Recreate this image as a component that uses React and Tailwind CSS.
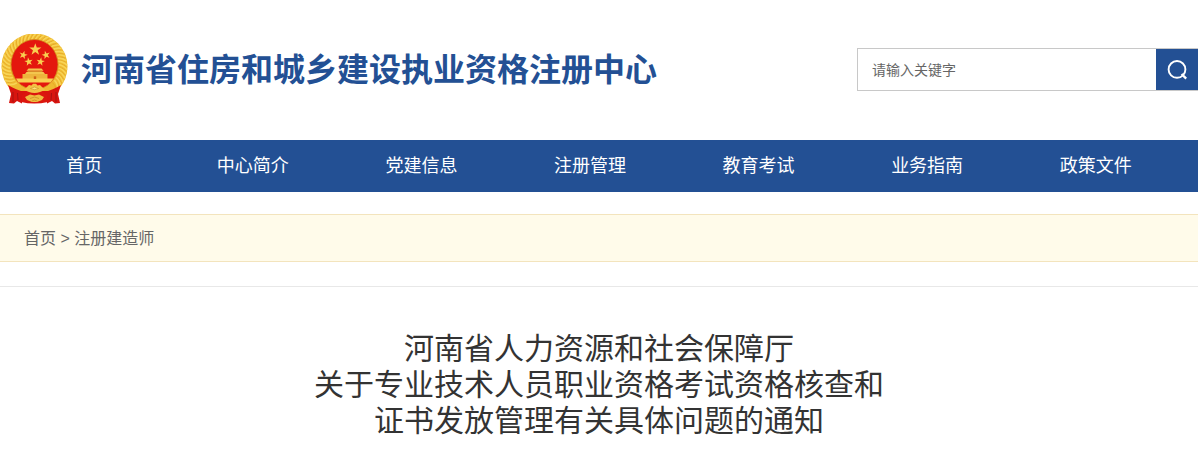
import React, { useState } from 'react';

const navItems = ['首页', '中心简介', '党建信息', '注册管理', '教育考试', '业务指南', '政策文件'];

const titleLines = [
  '河南省人力资源和社会保障厅',
  '关于专业技术人员职业资格考试资格核查和',
  '证书发放管理有关具体问题的通知'
];

// angles of the wheat ears around the emblem, open at the bottom
const grains = Array.from({ length: 34 }, (_, i) => 142 + i * 7.8);

const STAR = 'M0-10 2.3-3.2 9.5-3.1 3.7 1.2 5.9 8.1 0 3.9-5.9 8.1-3.7 1.2-9.5-3.1-2.3-3.2Z';

const stars = [
  { x: 35.3, y: 15.6, size: 0.64, turn: 0 },
  { x: 23.3, y: 21, size: 0.44, turn: 15 },
  { x: 28.7, y: 27.7, size: 0.44, turn: -10 },
  { x: 40.5, y: 27.7, size: 0.44, turn: 10 },
  { x: 46, y: 21, size: 0.44, turn: -15 }
];

const Emblem = () => (
  <svg className="h-[72px] w-[70px] shrink-0" viewBox="0 0 70 72" role="img" aria-label="国徽">
    <circle cx="34.5" cy="32.5" r="33" fill="#efb930" />
    {grains.map((angle) => (
      <g key={angle} transform={`translate(34.5 32.5) rotate(${angle})`}>
        <path d="M24-2Q29-1.5 32.5 3" fill="none" stroke="#f8d456" strokeWidth="1.6" />
        <path d="M24 1Q28 1 31 4" fill="none" stroke="#dfa024" strokeWidth=".6" />
      </g>
    ))}
    <ellipse cx="34.5" cy="30.5" rx="23.5" ry="25" fill="#e4170e" stroke="#d28a1c" strokeWidth=".8" />
    {stars.map((star) => (
      <path
        key={star.x}
        d={STAR}
        fill="#f9cf50"
        transform={`translate(${star.x} ${star.y}) rotate(${star.turn}) scale(${star.size})`}
      />
    ))}

    {/* Gate */}
    <path d="M28.5 34.5H41.5L43.5 36.8H26.5Z" fill="#f3c64e" />
    <path d="M27.5 36.8H42.5V38H27.5Z" fill="#d98a28" />
    <path d="M26.5 38H43.5L45 40H25Z" fill="#f3c64e" />
    <path d="M22.5 40H47.5V45H22.5Z" fill="#edb53c" />
    <path d="M16 44.5H53.5L50.5 48.5H18.5Z" fill="#f9d052" />
    <path d="M33.8 42.3H36.2V45H33.8Z" fill="#cf6418" />

    {/* Red drapes */}
    <path d="M21 57H48V68Q34 71 21 68Z" fill="#dc160e" />
    <path d="M8 51C13 54 19 57 26 58L22 61V69.5L17 67 14 69.5 9 69 11 60Z" fill="#d8140f" />
    <path d="M61 51C56 54 50 57 43 58L47 61V69.5L52 67 55 69.5 60 69 58 60Z" fill="#d8140f" />
    <path d="M13 58 13 68M17.5 59 18 66M56 58 56 68M51.5 59 51 66" stroke="#a81010" fill="none" />

    {/* Gear */}
    <path d="M27 53 29 51 31.5 51.5 33 49.8H36L37.5 51.5 40 51 42 53 45 56 40 58Q34.5 60 29 58L24 56Z" fill="#f3c246" />
    <path d="M30.5 54.5Q34.5 51.5 38.5 54.5Q34.5 57 30.5 54.5Z" fill="#ffe37a" stroke="#c98a1c" strokeWidth=".6" />
    <path d="M25 63 30 60.5 34.5 61.5 39 60.5 44 63 42 66 37 68H32L27 66Z" fill="#efbd40" />
    <path d="M30 64.5Q34.5 61.5 39 64.5M32 67Q34.5 65 37 67" fill="none" stroke="#c98a1c" strokeWidth=".7" />
  </svg>
);

const SearchForm = () => {
  const [keyword, setKeyword] = useState('');

  return (
    <form
      className="flex h-11 w-[341px] shrink-0 pb-px"
      onSubmit={(e) => e.preventDefault()}
    >
      <div className="flex flex-1 border border-r-0 border-[#c8c8c8]">
        <input
          type="text"
          aria-label="请输入关键字"
          placeholder="请输入关键字"
          value={keyword}
          onChange={(e) => setKeyword(e.target.value)}
          className="min-w-0 flex-1 px-3.5 text-sm text-[#666] outline-none placeholder:text-[#666]"
        />
        <button
          type="submit"
          aria-label="搜索"
          className="flex w-[42px] items-center justify-center bg-[#235094]"
        >
          <svg className="size-5" viewBox="0 0 20 20" fill="none" stroke="#fff" strokeWidth="1.9">
            <circle cx="10" cy="9.4" r="8.4" />
            <path d="M14.6 14 19.2 18.6" strokeWidth="2.4" />
          </svg>
        </button>
      </div>
    </form>
  );
};

const App = () => {
  return (
    <div className="bg-white font-['Liberation_Sans','Noto_Sans_CJK_SC',sans-serif] text-[#333]">
      {/* Header */}
      <header className="flex h-[140px] items-center justify-between gap-4">
        <a href="#" className="flex items-center gap-[11px] text-[32px] font-bold text-[#235094]">
          <Emblem />
          <span>河南省住房和城乡建设执业资格注册中心</span>
        </a>
        <SearchForm />
      </header>

      {/* Main menu */}
      <nav className="grid grid-cols-7 bg-[#235094] pr-[18px] text-center text-lg text-white">
        {navItems.map((item) => (
          <a key={item} href="#" className="leading-[52px]">
            {item}
          </a>
        ))}
      </nav>

      {/* Breadcrumb */}
      <div className="mt-[22px] border-y border-[#f3e4bd] bg-[#fffbea] px-6 pt-px text-base leading-[45px] text-[#666]">
        <a href="#">首页</a> &gt; <a href="#">注册建造师</a>
      </div>

      {/* Article */}
      <main className="mt-6 border-t border-[#e8e8e8] pt-11 pb-8">
        <h1 className="text-center text-[30px] leading-9">
          {titleLines.map((line) => (
            <span key={line} className="block">
              {line}
            </span>
          ))}
        </h1>
      </main>
    </div>
  );
};

export default App;
